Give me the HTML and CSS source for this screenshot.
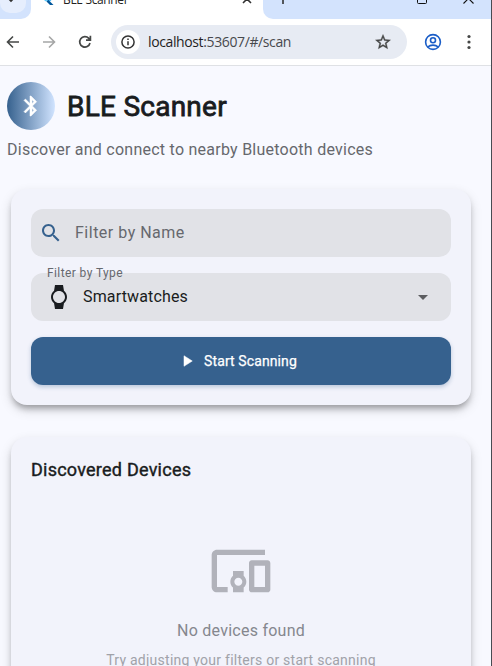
FILE: index.html
```html
<!DOCTYPE html>
<html lang="en">
<head>
<meta charset="utf-8">
<title>BLE Scanner</title>
<link rel="stylesheet" href="styles.css">
</head>
<body>
<div class="window">
  <div class="tabstrip">
    <div class="tabsearch"><div class="pill"><svg width="8" height="5" viewBox="0 0 8 5"><path d="M1 0l3 3 3-3" fill="none" stroke="#333" stroke-width="1.7"/></svg></div></div>
    <div class="tab">
      <svg class="flutter" width="13" height="16" viewBox="0 0 13 16"><path d="M1 10L10 1h3L3 11.500z" fill="#54c5f8"/><path d="M3.500 11.500L7 8h3.500L7 11.500z" fill="#40b5f6"/><path d="M3.500 11.500L7 15h3.500L7 11.500 5.200 9.800z" fill="#01579b"/></svg>
      <span class="tab-title">BLE Scanner</span>
      <svg class="tab-close" width="10" height="10" viewBox="0 0 10 10"><path d="M1 1l8 8M9 1L1 9" stroke="#333" stroke-width="1.600"/></svg>
    </div>
    <div class="strip-rest">
      <svg class="plus" width="12" height="12" viewBox="0 0 12 12"><path d="M6 0v12M0 6h12" stroke="#333" stroke-width="1.600"/></svg>
      <svg class="max" width="10" height="10" viewBox="0 0 10 10"><rect x=".5" y=".5" width="9" height="9" rx="1" fill="none" stroke="#111"/></svg>
      <svg class="close" width="11" height="11" viewBox="0 0 11 11"><path d="M.5.5l10 10M10.500.5l-10 10" stroke="#111" stroke-width="1.100"/></svg>
    </div>
  </div>
  <div class="toolbar">
    <svg class="back" width="20" height="20" viewBox="0 0 20 20"><path d="M16 10H5M10 4.500L4.500 10l5.500 5.500" fill="none" stroke="#454746" stroke-width="1.600"/></svg>
    <svg class="forward" width="20" height="20" viewBox="0 0 20 20"><path d="M4 10h11M10 4.500l5.500 5.500-5.500 5.500" fill="none" stroke="#a5a6a6" stroke-width="1.600"/></svg>
    <svg class="reload" width="20" height="20" viewBox="0 0 20 20"><path d="M15 11a5.200 5.200 0 1 1-1.200-4.600L15.200 8M15.400 3.800v4.400H11" fill="none" stroke="#454746" stroke-width="1.700"/></svg>
    <div class="omnibox">
      <div class="info"><svg width="14" height="14" viewBox="0 0 14 14"><circle cx="7" cy="7" r="6.100" fill="none" stroke="#333" stroke-width="1.500"/><path d="M7 6.200v4M7 3.500v1.500" stroke="#333" stroke-width="1.500"/></svg></div>
      <span class="url">localhost<span class="path">:53607/#/scan</span></span>
      <svg class="star" width="18" height="18" viewBox="0 0 24 24"><path fill="#454746" stroke="#454746" stroke-width=".5" d="M22 9.240l-7.190-.62L12 2 9.190 8.630 2 9.240l5.460 4.730L5.820 21 12 17.270 18.180 21l-1.630-7.030L22 9.240zM12 15.400l-3.760 2.270 1-4.280-3.320-2.880 4.380-.38L12 6.100l1.710 4.040 4.380.38-3.320 2.880 1 4.280L12 15.400z"/></svg>
    </div>
    <svg class="profile" width="18" height="18" viewBox="0 0 18 18" fill="none" stroke="#1a5dc7" stroke-width="1.600"><circle cx="9" cy="9" r="7.400"/><circle cx="9" cy="7.300" r="2.500"/><path d="M3.700 14c1.500-1.300 3.200-1.900 5.300-1.900s3.800.6 5.300 1.900"/></svg>
    <svg class="more" width="4" height="16" viewBox="0 0 4 16" fill="#454746"><circle cx="2" cy="2.500" r="1.600"/><circle cx="2" cy="8" r="1.600"/><circle cx="2" cy="13.500" r="1.600"/></svg>
  </div>
  <main class="page">
    <header class="title-row">
      <div class="logo"><svg width="24" height="24" viewBox="0 0 24 24"><path fill="#fff" stroke="#fff" stroke-width=".5" d="M17.710 7.710L12 2h-1v7.590L6.410 5 5 6.410 10.590 12 5 17.590 6.410 19 11 14.410V22h1l5.710-5.710-4.300-4.290 4.300-4.290zM13 5.830l1.880 1.880L13 9.590V5.830zm1.880 10.460L13 18.170v-3.760l1.880 1.880z"/></svg></div>
      <h1>BLE Scanner</h1>
    </header>
    <p class="subtitle">Discover and connect to nearby Bluetooth devices</p>
    <section class="card filters">
      <div class="field name">
        <svg width="24" height="24" viewBox="0 0 24 24"><path fill="#36618e" d="M15.500 14h-.79l-.28-.27C15.410 12.590 16 11.110 16 9.500 16 5.910 13.090 3 9.500 3S3 5.910 3 9.500 5.910 16 9.500 16c1.610 0 3.090-.59 4.230-1.570l.27.28v.79l5 4.990L20.490 19l-4.990-5zm-6 0C7.010 14 5 11.990 5 9.500S7.010 5 9.500 5 14 7.010 14 9.500 11.990 14 9.500 14z"/></svg>
        <span class="hint">Filter by Name</span>
      </div>
      <div class="field type">
        <span class="label">Filter by Type</span>
        <svg width="24" height="24" viewBox="0 0 24 24"><path fill="#191c20" d="M20 12c0-2.540-1.190-4.810-3.040-6.270L16 0H8l-.95 5.730C5.190 7.190 4 9.450 4 12s1.190 4.810 3.050 6.270L8 24h8l.96-5.730C18.810 16.810 20 14.540 20 12zM6 12c0-3.310 2.690-6 6-6s6 2.690 6 6-2.690 6-6 6-6-2.690-6-6z"/></svg>
        <span class="value">Smartwatches</span>
        <svg class="arrow" width="24" height="24" viewBox="0 0 24 24"><path fill="#5c5d61" d="M7 10l5 5 5-5z"/></svg>
      </div>
      <button class="scan"><svg width="18" height="18" viewBox="0 0 24 24"><path fill="#fff" stroke="#fff" stroke-width=".7" d="M8 5v14l11-7z"/></svg><span>Start Scanning</span></button>
    </section>
    <section class="card devices">
      <h2>Discovered Devices</h2>
      <div class="empty">
        <svg width="64" height="64" viewBox="0 0 24 24"><path fill="#b1b2ba" d="M3 6h18V4H3c-1.100 0-2 .9-2 2v12c0 1.100.9 2 2 2h4v-2H3V6zm10 6H9v1.780c-.61.55-1 1.330-1 2.220s.39 1.670 1 2.220V20h4v-1.780c.61-.55 1-1.340 1-2.220s-.39-1.670-1-2.220V12zm-2 5.500c-.83 0-1.500-.67-1.500-1.500s.67-1.500 1.500-1.500 1.500.67 1.500 1.500-.67 1.500-1.500 1.500zM22 8h-6c-.5 0-1 .5-1 1v10c0 .5.5 1 1 1h6c.5 0 1-.5 1-1V9c0-.5-.5-1-1-1zm-1 10h-4v-8h4v8z"/></svg>
        <p class="none">No devices found</p>
        <p class="tip">Try adjusting your filters or start scanning</p>
      </div>
    </section>
  </main>
</div>
</body>
</html>
```
FILE: styles.css
```css
* { box-sizing: border-box; }
body { margin: 0; height: 666px; overflow: hidden; font-family: Roboto, sans-serif; color: #191c20; }
h1, h2, p { margin: 0; }
svg { display: block; flex: none; }
.window { height: 666px; overflow: hidden; border-right: 1px solid #484b52; background: #f8f9ff; display: flex; flex-direction: column; }

.tabstrip { display: flex; height: 19px; flex: none; background: #fff; }
.tabsearch { width: 31px; background: #d3e3fd; border-radius: 0 0 10px 0; }
.pill { width: 26px; height: 13px; background: #e6eefd; border-radius: 0 0 10px 10px; padding-left: 7px; overflow: hidden; }
.pill svg { margin-top: -2px; }
.tab { flex: none; width: 232px; height: 19px; display: flex; align-items: flex-start; overflow: hidden; padding-left: 12px; }
.flutter { margin-top: -10px; }
.tab-title { margin: -8px 0 0 7px; font: 12px/16px "Open Sans", sans-serif; letter-spacing: -.35px; color: #222; white-space: nowrap; width: 144px; }
.tab-close { margin: -6px 0 0 35px; }
.strip-rest { flex: 1; display: flex; overflow: hidden; background: #d3e3fd; border-radius: 0 0 0 10px; }
.plus { margin: -8px 0 0 14px; }
.max { margin: -6px 0 0 128px; }
.close { margin: -7px 0 0 36px; }

.toolbar { height: 47px; flex: none; display: flex; align-items: center; background: #fff; border-bottom: 1px solid #dfe1e5; padding-left: 3px; }
.forward { margin-left: 16px; }
.reload { margin-left: 16px; }
.omnibox { margin-left: 16px; width: 296px; height: 34px; border-radius: 17px; background: #e7ebf3; display: flex; align-items: center; padding: 0 15px 0 5px; }
.info { width: 24px; height: 24px; border-radius: 50%; background: #fff; display: flex; align-items: center; justify-content: center; }
.url { margin-left: 8px; flex: 1; font: 14px/20px "Open Sans", sans-serif; letter-spacing: -.38px; color: #1f1f1f; }
.path { color: #47494d; }
.profile { margin-left: 17px; }
.more { margin-left: 25px; }

.page { flex: 1; min-height: 0; padding: 16px 20px 0 11px; }
.title-row { display: flex; align-items: center; gap: 12px; margin-left: -4px; }
.logo { width: 48px; height: 48px; border-radius: 50%; background: linear-gradient(90deg, #36618e, #d1e4ff); display: flex; align-items: center; justify-content: center; }
h1 { padding-top: 1px; font-size: 28px; line-height: 36px; font-weight: 400; letter-spacing: .25px; -webkit-text-stroke: .8px currentColor; white-space: nowrap; }
.subtitle { margin: 8px 0 0 -4px; font-size: 16px; line-height: 24px; letter-spacing: .25px; color: #66686d; white-space: nowrap; }
.card { border-radius: 16px; background: #f2f3fb; padding: 20px; box-shadow: 0 5px 6px -2px rgba(0,0,0,.3), 0 5px 12px rgba(0,0,0,.15); }
.filters { margin-top: 27px; height: 216px; }
.field { height: 48px; border-radius: 12px; background: #e1e2e7; display: flex; align-items: center; font-size: 16px; line-height: 24px; }
.name { padding-left: 8px; }
.hint { margin-left: 12px; letter-spacing: .5px; color: #66686e; }
.type { position: relative; margin-top: 16px; padding: 0 16px; }
.label { position: absolute; left: 16px; top: -9px; font-size: 12px; line-height: 18px; letter-spacing: .4px; color: #66686e; }
.value { margin-left: 12px; flex: 1; letter-spacing: .15px; }
.scan { margin-top: 16px; width: 100%; height: 48px; border: 0; border-radius: 12px; background: #36618e; color: #fff; display: flex; align-items: center; justify-content: center; gap: 8px; padding: 0 13px 0 6px; font: 400 14px/20px Roboto, sans-serif; -webkit-text-stroke: .25px currentColor; letter-spacing: .1px; box-shadow: 0 2px 4px rgba(54,97,142,.3); }
.devices { margin-top: 32px; height: 300px; }
h2 { font-size: 18px; line-height: 26px; font-weight: 400; letter-spacing: .24px; -webkit-text-stroke: .4px currentColor; white-space: nowrap; }
.empty { display: flex; flex-direction: column; align-items: center; padding-top: 56px; }
.none { margin-top: 16px; font-size: 16px; line-height: 24px; letter-spacing: .25px; color: #85878e; }
.tip { margin-top: 7px; font-size: 14px; line-height: 20px; letter-spacing: .25px; color: #a1a2a9; }
```
